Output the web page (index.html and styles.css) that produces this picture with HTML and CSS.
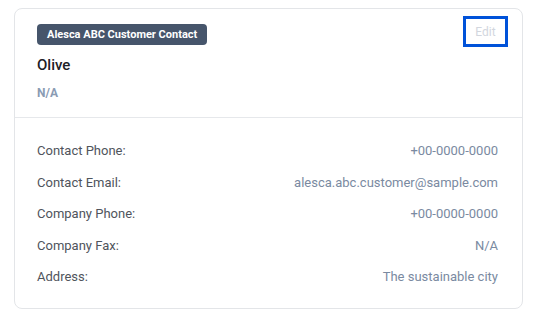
FILE: index.html
```html
<!DOCTYPE html>
<html>
<head>
<meta charset="utf-8">
<link rel="stylesheet" href="styles.css">
</head>
<body>
<div class="card">
  <div class="header">
    <div class="head-main">
      <span class="badge">Alesca ABC Customer Contact</span>
      <div class="name">Olive</div>
      <div class="sub">N/A</div>
    </div>
    <button class="edit">Edit</button>
  </div>
  <div class="details">
    <div class="row"><span class="label">Contact Phone:</span><span class="value">+00-0000-0000</span></div>
    <div class="row"><span class="label">Contact Email:</span><span class="value">alesca.abc.customer@sample.com</span></div>
    <div class="row"><span class="label">Company Phone:</span><span class="value">+00-0000-0000</span></div>
    <div class="row"><span class="label">Company Fax:</span><span class="value">N/A</span></div>
    <div class="row"><span class="label">Address:</span><span class="value">The sustainable city</span></div>
  </div>
</div>
</body>
</html>
```
FILE: styles.css
```css
html, body {
  margin: 0;
  padding: 0;
  background: #ffffff;
}
body {
  padding: 8px 15px 0 14px;
  font-family: Roboto, "Liberation Sans", sans-serif;
}
.card {
  width: 507px;
  height: 299px;
  border: 1px solid #e3e5e8;
  border-radius: 8px;
  box-sizing: content-box;
}
.header {
  display: flex;
  justify-content: space-between;
  align-items: flex-start;
  padding: 7px 14px 16px 22px;
  border-bottom: 1px solid #e6e8eb;
}
.head-main {
  padding-top: 8px;
  display: flex;
  flex-direction: column;
  align-items: flex-start;
}
.badge {
  display: inline-block;
  height: 21px;
  line-height: 21px;
  padding: 0 10px;
  background: #46556b;
  color: #ffffff;
  font-size: 11px;
  font-weight: 700;
  border-radius: 4px;
}
.name {
  margin-top: 10px;
  font-size: 15px;
  line-height: 20px;
  font-weight: 500;
  color: #1d2026;
}
.sub {
  margin-top: 10px;
  font-size: 12px;
  line-height: 16px;
  font-weight: 700;
  color: #8a9bb3;
}
.edit {
  width: 45px;
  height: 31px;
  border: 3px solid #0052d9;
  background: #ffffff;
  color: #d2d6de;
  font-family: Roboto, "Liberation Sans", sans-serif;
  font-size: 12px;
  padding: 0;
  box-sizing: border-box;
}
.details {
  padding: 17px 24px 0 22px;
}
.row {
  display: flex;
  justify-content: space-between;
  align-items: center;
  height: 31.5px;
  font-size: 13px;
}
.label {
  color: #4f545c;
}
.value {
  color: #7a8aa1;
}
```
